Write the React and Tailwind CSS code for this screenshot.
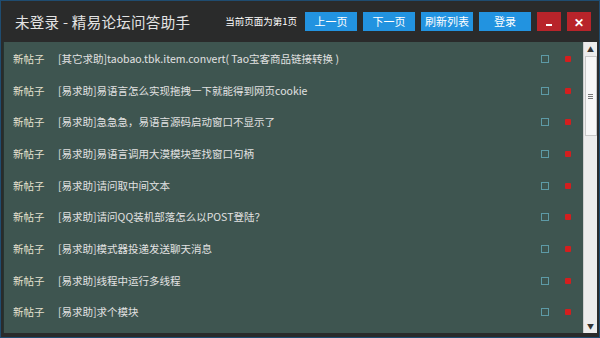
import React from "react";

const posts = [
    "[其它求助]taobao.tbk.item.convert(  Tao宝客商品链接转换 )",
    "[易求助]易语言怎么实现拖拽一下就能得到网页cookie",
    "[易求助]急急急，易语言源码启动窗口不显示了",
    "[易求助]易语言调用大漠模块查找窗口句柄",
    "[易求助]请问取中间文本",
    "[易求助]请问QQ装机部落怎么以POST登陆？",
    "[易求助]模式器投递发送聊天消息",
    "[易求助]线程中运行多线程",
    "[易求助]求个模块",
];

const font = { fontFamily: '"Noto Sans CJK SC", "Noto Sans", sans-serif' };

const App = () => {
    return (
        <div
            className="w-[600px] h-[338px] bg-[#2a2b2b] border border-[#1f4c70] flex flex-col overflow-hidden"
            style={font}
        >
            {/* Title bar */}
            <header className="h-[41px] flex items-center pl-[14px] pr-[8px] shrink-0">
                <h1 className="text-[14.5px] text-[#e4e4e4] tracking-[0.3px]">未登录 - 精易论坛问答助手</h1>
                <span className="ml-auto text-[9.5px] text-white mr-[8px]">当前页面为第1页</span>
                <div className="flex gap-[6px]">
                    {["上一页", "下一页", "刷新列表", "登录"].map((t) => (
                        <button key={t} className="w-[52px] h-[19px] bg-[#2293e0] text-white text-[11px] leading-none flex items-center justify-center">
                            {t}
                        </button>
                    ))}
                    <button className="w-[24px] h-[19px] bg-[#b8242a] flex items-end justify-center pb-[5px]">
                        <span className="block w-[6px] h-[2px] bg-white" />
                    </button>
                    <button className="w-[24px] h-[19px] bg-[#b8242a] text-white text-[12px] font-bold flex items-center justify-center">
                        ✕
                    </button>
                </div>
            </header>

            {/* Post list */}
            <main className="flex-1 flex ml-[2px] mr-[2px] mb-[4px] bg-[#3e5550] border-l-[1px] border-[#243331]">
                <div className="flex-1 flex flex-col pt-[1px]">
                    {posts.map((p, i) => (
                        <div key={i} className="h-[31.7px] flex items-center text-[10.5px]">
                            <span className="w-[54px] pl-[9px] text-[#e6e2cf] shrink-0">新帖子</span>
                            <span className="text-[#e2e2e2] truncate w-[483px]">{p}</span>
                            <span className="w-[8px] h-[8px] border border-[#5d9aa6] shrink-0" />
                            <span className="w-[6px] h-[6px] rounded-[1px] bg-[#d41e1e] ml-[16px] shrink-0" />
                        </div>
                    ))}
                </div>

                {/* Scrollbar */}
                <div className="w-[14px] bg-[#ececec] flex flex-col items-center border-l border-[#cfcfcf]">
                    <div className="h-[14px] w-full flex items-center justify-center text-[#333] text-[7px]">▲</div>
                    <div className="w-[12px] h-[80px] bg-[#f7f7f7] border border-[#c8c8c8] flex flex-col items-center justify-center gap-[1px]">
                        <span className="block w-[5px] h-[1px] bg-[#777]" />
                        <span className="block w-[5px] h-[1px] bg-[#777]" />
                        <span className="block w-[5px] h-[1px] bg-[#777]" />
                    </div>
                    <div className="flex-1" />
                    <div className="h-[14px] w-full flex items-center justify-center text-[#333] text-[7px]">▼</div>
                </div>
            </main>
        </div>
    );
};

export default App;
